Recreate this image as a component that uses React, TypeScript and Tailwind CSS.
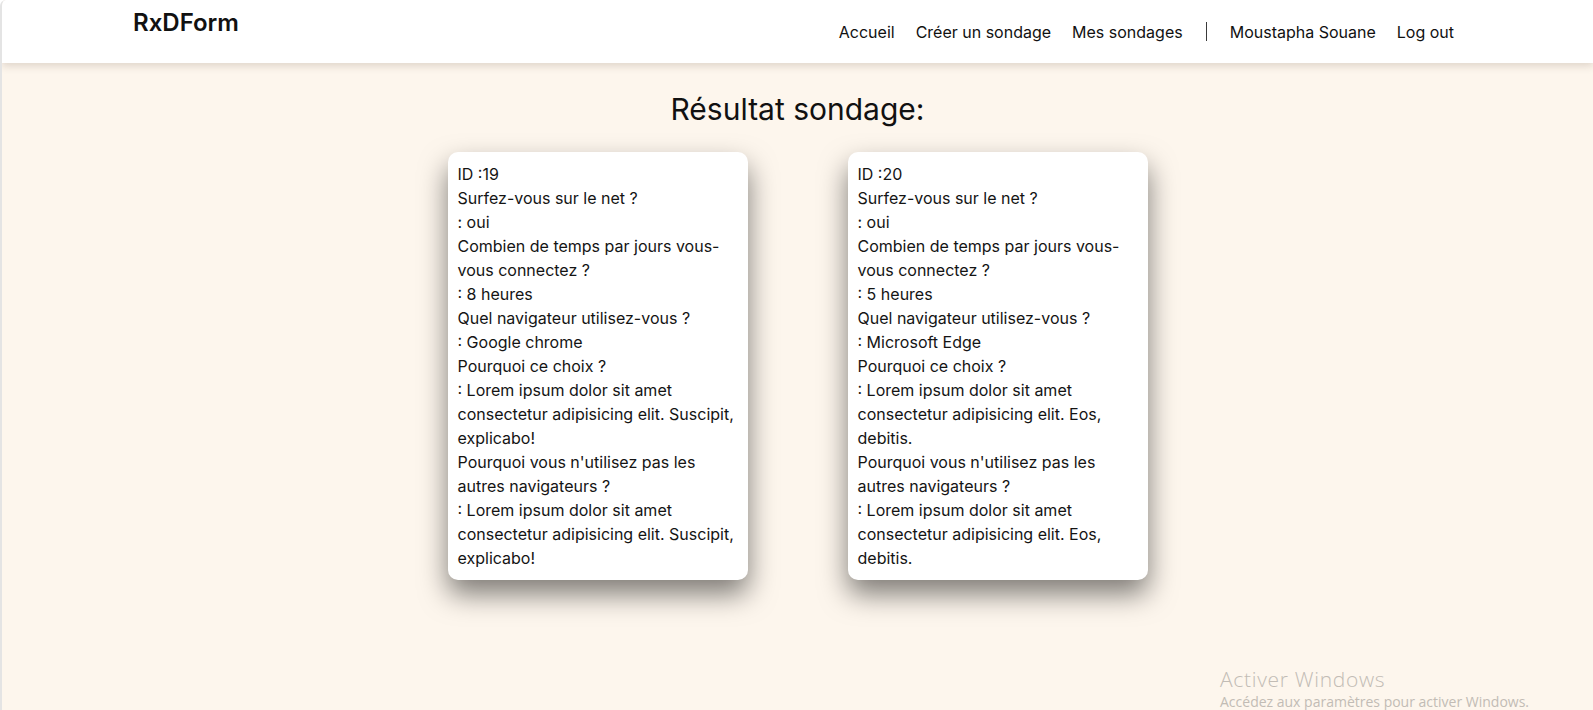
import React from "react";

type Answer = { question: string; answer: string };
type Result = { id: number; answers: Answer[] };

const lorem19 = "Lorem ipsum dolor sit amet consectetur adipisicing elit. Suscipit, explicabo!";
const lorem20 = "Lorem ipsum dolor sit amet consectetur adipisicing elit. Eos, debitis.";

const results: Result[] = [
  {
    id: 19,
    answers: [
      { question: "Surfez-vous sur le net ?", answer: "oui" },
      { question: "Combien de temps par jours vous-vous connectez ?", answer: "8 heures" },
      { question: "Quel navigateur utilisez-vous ?", answer: "Google chrome" },
      { question: "Pourquoi ce choix ?", answer: lorem19 },
      { question: "Pourquoi vous n'utilisez pas les autres navigateurs ?", answer: lorem19 },
    ],
  },
  {
    id: 20,
    answers: [
      { question: "Surfez-vous sur le net ?", answer: "oui" },
      { question: "Combien de temps par jours vous-vous connectez ?", answer: "5 heures" },
      { question: "Quel navigateur utilisez-vous ?", answer: "Microsoft Edge" },
      { question: "Pourquoi ce choix ?", answer: lorem20 },
      { question: "Pourquoi vous n'utilisez pas les autres navigateurs ?", answer: lorem20 },
    ],
  },
];

const links = ["Accueil", "Créer un sondage", "Mes sondages"];

const ResultCard = ({ result }: { result: Result }) => (
  <div className="w-[300px] p-[10px] bg-white rounded-[10px] shadow-[0_14px_28px_rgba(0,0,0,0.5)] text-base leading-6 text-[#141414]">
    <p>ID :{result.id}</p>
    {result.answers.map((a, i) => (
      <div key={i}>
        <p>{a.question}</p>
        <p>: {a.answer}</p>
      </div>
    ))}
  </div>
);

export default function App() {
  return (
    <div
      className="relative min-h-screen bg-[#fdf6ed] border-l-2 border-[#e4e4e4] rounded-tl-md overflow-hidden"
      style={{ fontFamily: "Inter, 'Noto Sans', sans-serif" }}
    >
      <header className="h-[63px] bg-white flex items-center justify-between pl-[131px] pr-[139px] shadow-[0_3px_8px_rgba(60,40,20,0.16)] relative z-10">
        <div className="mb-[17px] text-2xl leading-8 font-semibold text-[#111]">RxDForm</div>
        <nav className="flex items-center gap-[21px] text-base leading-6 text-[#111]">
          {links.map((l) => (
            <a key={l} href="#">
              {l}
            </a>
          ))}
          <span className="w-px h-[19px] bg-[#3a3a3a] mx-[2px]"></span>
          <a href="#">Moustapha Souane</a>
          <a href="#">Log out</a>
        </nav>
      </header>

      <main className="flex flex-col items-center">
        <h1 className="mt-[28px] mb-[25px] text-3xl leading-9 font-normal text-[#111]">Résultat sondage:</h1>
        <div className="flex gap-[100px]">
          {results.map((r) => (
            <ResultCard key={r.id} result={r} />
          ))}
        </div>
      </main>

      <div
        className="absolute left-[1218px] top-[667px] text-[#c2bcb5]"
        style={{ fontFamily: "'Open Sans', 'Noto Sans', sans-serif" }}
      >
        <p className="text-[21px] leading-6 tracking-[0.7px] font-light">Activer Windows</p>
        <p className="mt-[1px] text-[14px] leading-5">Accédez aux paramètres pour activer Windows.</p>
      </div>
    </div>
  );
}
